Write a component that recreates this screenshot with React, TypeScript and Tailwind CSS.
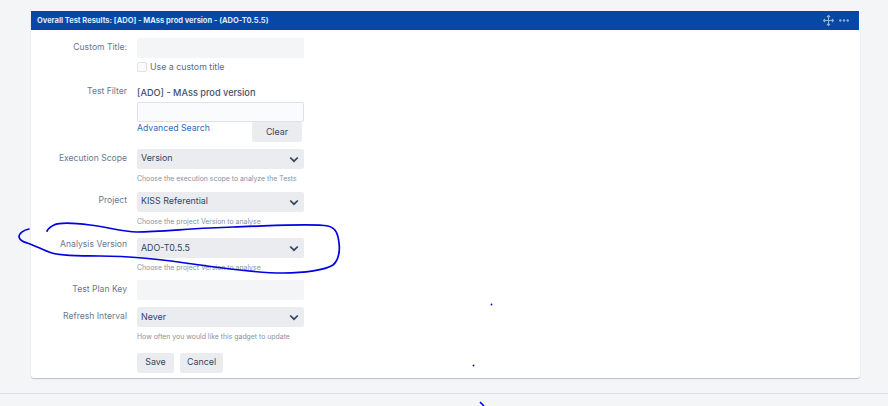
import React from "react";

const font = { fontFamily: "Inter, 'Liberation Sans', sans-serif" };

function Chevron() {
  return (
    <svg width="10" height="7" viewBox="0 0 10 7" className="shrink-0">
      <path d="M1.2 1.5 L5 5.2 L8.8 1.5" fill="none" stroke="#344563" strokeWidth="1.7" />
    </svg>
  );
}

function Label({ children }: { children: React.ReactNode }) {
  return <div className="w-[96px] shrink-0 text-right text-[8.6px] leading-[12px] text-[#6b778c]">{children}</div>;
}

function Select({ value, textClass }: { value: string; textClass: string }) {
  return (
    <div className="flex h-[20px] w-[167px] items-center justify-between rounded-[2px] bg-[#ebecf0] pl-[4px] pr-[5px] text-[8.9px] text-[#344563]">
      <span className={textClass}>{value}</span>
      <Chevron />
    </div>
  );
}

function Help({ children }: { children: React.ReactNode }) {
  return <div className="mt-[5px] h-[9px] text-[6.9px] leading-[9px] text-[#8993a4]">{children}</div>;
}

function Btn({ children, className }: { children: React.ReactNode; className: string }) {
  return (
    <div className={`flex h-[20px] items-center justify-center rounded-[2px] bg-[#ebecf0] text-[8.9px] text-[#344563] ${className}`}>
      {children}
    </div>
  );
}

function SelectRow({ label, value, help, className, labelClass, textClass }: { label: string; value: string; help: string; className: string; labelClass: string; textClass: string }) {
  return (
    <div className={`flex gap-[10px] ${className}`}>
      <div className={labelClass}>
        <Label>{label}</Label>
      </div>
      <div>
        <Select value={value} textClass={textClass} />
        <Help>{help}</Help>
      </div>
    </div>
  );
}

export default function App() {
  return (
    <div style={font} className="relative h-[406px] w-[888px] overflow-hidden bg-[#f4f5f7]">
      <div className="ml-[31px] w-[829px] pt-[11px]">
        <div className="h-[367px] rounded-b-[3px] bg-white shadow-[0_1px_1px_rgba(9,30,66,0.25)]">
          <div className="mr-[1px] flex h-[19px] items-center justify-between bg-[#0747a6] pl-[6px] pr-[10px]">
            <span className="text-[7.5px] font-bold text-[#deebff]">Overall Test Results: [ADO] - MAss prod version - (ADO-T0.5.5)</span>
            <div className="flex items-center gap-[5px]">
              <svg width="11" height="11" viewBox="0 0 11 11">
                <path d="M5.5 0.5 V10.5 M0.5 5.5 H10.5 M4 2 L5.5 0.5 L7 2 M4 9 L5.5 10.5 L7 9 M2 4 L0.5 5.5 L2 7 M9 4 L10.5 5.5 L9 7" fill="none" stroke="#8fb0e0" strokeWidth="1.1" />
              </svg>
              <svg width="10" height="3" viewBox="0 0 10 3">
                <circle cx="1.3" cy="1.5" r="1.2" fill="#8fb0e0" />
                <circle cx="5" cy="1.5" r="1.2" fill="#8fb0e0" />
                <circle cx="8.7" cy="1.5" r="1.2" fill="#8fb0e0" />
              </svg>
            </div>
          </div>

          <div className="pt-[8px]">
            <div className="flex gap-[10px]">
              <div className="pt-[3px]"><Label>Custom Title:</Label></div>
              <div>
                <div className="h-[20px] w-[167px] rounded-[2px] bg-[#f4f5f7]" />
                <div className="mt-[3px] flex h-[12px] items-center gap-[3px]">
                  <div className="h-[10px] w-[10px] rounded-[2px] border border-[#dfe1e6] bg-[#fafbfc]" />
                  <span className="text-[8.8px] text-[#5e6c84]">Use a custom title</span>
                </div>
              </div>
            </div>

            <div className="mt-[11px] flex gap-[10px]">
              <div className="pt-[1px]"><Label>Test Filter</Label></div>
              <div className="w-[167px]">
                <div className="flex h-[18px] items-center text-[9.2px] font-medium text-[#42526e]">[ADO] - MAss prod version</div>
                <div className="h-[20px] rounded-[2px] border border-[#dfe1e6] bg-[#fafbfc]" />
                <div className="flex items-start justify-between pr-[2px]">
                  <span className="text-[8.7px] leading-[12px] text-[#2a6ebb]">Advanced Search</span>
                  <Btn className="w-[50px]">Clear</Btn>
                </div>
              </div>
            </div>

            <SelectRow className="mt-[7px]" labelClass="pt-[3px]" textClass="pb-[2px]" label="Execution Scope" value="Version" help="Choose the execution scope to analyze the Tests" />
            <SelectRow className="mt-[9px]" labelClass="pt-[2px]" textClass="pb-[2px]" label="Project" value="KISS Referential" help="Choose the project Version to analyse" />
            <SelectRow className="mt-[12px]" labelClass="pt-0" textClass="pb-0" label="Analysis Version" value="ADO-T0.5.5" help="Choose the project Version to analyse" />

            <div className="mt-[8px] flex gap-[10px]">
              <div className="pt-[3px]"><Label>Test Plan Key</Label></div>
              <div className="h-[20px] w-[167px] rounded-[2px] bg-[#f4f5f7]" />
            </div>

            <SelectRow className="mt-[7px]" labelClass="pt-[3px]" textClass="pb-0" label="Refresh Interval" value="Never" help="How often you would like this gadget to update" />

            <div className="ml-[106px] mt-[12px] flex gap-[6px]">
              <Btn className="w-[37px] pb-[2px]">Save</Btn>
              <Btn className="w-[43px] pb-[2px]">Cancel</Btn>
            </div>
          </div>
        </div>
      </div>
      <div className="mt-[15px] h-px bg-[#dfe1e6]" />

      <svg width="888" height="406" viewBox="0 0 888 406" className="pointer-events-none absolute left-0 top-0">
        <path
          d="M29 229 C24 230 19 233 19 237 C20 241 24 242 30 244 C38 247 45 251 52 253 C62 256 80 256 100 256 C125 256 160 259 200 265 C235 270 262 273 283 273 C305 273 325 270 333 265 C339 260 340 250 339 243 C338 234 336 228 328 226 C312 223 270 226 233 227 C195 228 160 232 137 232 C122 232 108 227 90 225 C75 223 60 222 54 225 C50 227 48 229 47 231"
          fill="none"
          stroke="#0000e0"
          strokeWidth="1.7"
          strokeLinecap="round"
        />
        <circle cx="491.5" cy="304.5" r="0.9" fill="#0000e0" />
        <circle cx="473.5" cy="365.5" r="0.9" fill="#0000e0" />
        <path d="M480 402 L484 406" stroke="#0000e0" strokeWidth="1.6" fill="none" />
      </svg>
    </div>
  );
}
